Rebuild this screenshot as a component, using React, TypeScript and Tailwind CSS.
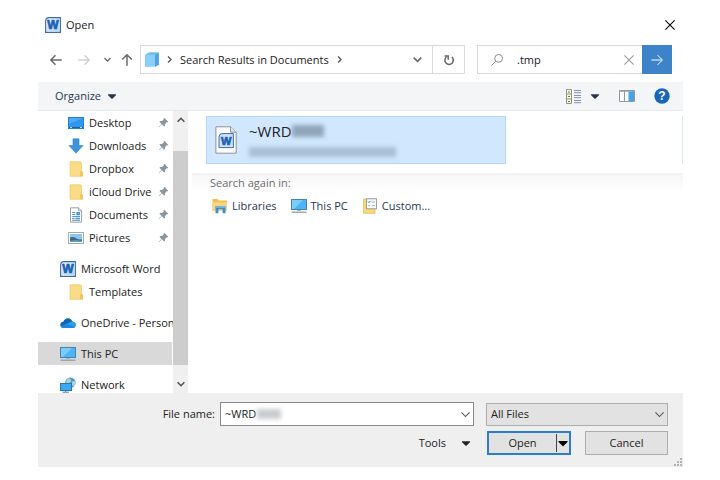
import React from 'react'
import { FaCaretDown } from 'react-icons/fa'

type IconProps = { className?: string }

const WordIcon = ({ className = 'size-4' }: IconProps) => (
  <svg viewBox="0 0 16 16" className={className} aria-hidden="true">
    <defs>
      <linearGradient id="wordFill" x1="0" y1="0" x2="1" y2="1">
        <stop offset="0" stopColor="#f4f9fe" />
        <stop offset="1" stopColor="#a9cdf0" />
      </linearGradient>
    </defs>
    <path d="M4 .6H15.4V15.4H.6V4Q.8.8 4 .6Z" fill="url(#wordFill)" stroke="#3c6cb0" strokeWidth="1.1" />
    <path d="M1.8 14.2H14.2V2" fill="none" stroke="#dcebfa" strokeWidth=".8" />
    <text x="7.8" y="12.2" textAnchor="middle" fontFamily="Liberation Sans, sans-serif" fontWeight="bold" fontSize="12" fill="#1c5fb4" stroke="#1c5fb4" strokeWidth=".7">
      W
    </text>
  </svg>
)

const WordFileIcon = () => (
  <svg viewBox="0 0 22 28" className="h-7 w-[22px] shrink-0" aria-hidden="true">
    <path d="M.9.8H15.5L21.2 6.2V27.2H.9Z" fill="#fdfdfd" stroke="#8c9399" />
    <path d="M15.5.8V6.2H21.2" fill="#e3e7ea" stroke="#8c9399" />
    <path d="M7 7.6H18.4V21.6H4V11Q4.2 7.8 7 7.6Z" fill="#cfe3f7" stroke="#3c6cb0" />
    <text x="11.2" y="18.8" textAnchor="middle" fontFamily="Liberation Sans, sans-serif" fontWeight="bold" fontSize="11" fill="#1c5fb4" stroke="#1c5fb4" strokeWidth=".7">
      W
    </text>
  </svg>
)

const SearchFolderIcon = () => (
  <svg viewBox="0 0 16 16" className="size-4 shrink-0" aria-hidden="true">
    <path d="M1 3.5L5 1.2V14.5H1Z" fill="#63b7ee" />
    <path d="M1.4 2.6L5.4.4H14.8V12.8L11 14.8H1.4Z" fill="#8bd0fa" />
    <path d="M11 2.8L14.8.4V12.8L11 14.8Z" fill="#4ba3e3" />
    <path d="M1.4 2.8L5.4.4H14.8L11 2.8Z" fill="#6fbdf0" />
  </svg>
)

const DesktopIcon = () => (
  <svg viewBox="0 0 16 16" className="size-4 shrink-0" aria-hidden="true">
    <rect x=".5" y="2.5" width="15" height="11" fill="#3197ee" stroke="#1e7fd6" />
    <path d="M1 3H15L1 9Z" fill="#4faaf5" />
    <path d="M1 12.5H15" stroke="#1161ad" />
    <path d="M2 12.5H4M12 12.5H14" stroke="#b9defc" />
  </svg>
)

const DownloadIcon = () => (
  <svg viewBox="0 0 16 16" className="size-4 shrink-0" aria-hidden="true">
    <path d="M5 .8H11V7.5H15L8 15.2L1 7.5H5Z" fill="#3f92dc" stroke="#2f7fc8" strokeWidth=".6" />
  </svg>
)

const FolderIcon = () => (
  <svg viewBox="0 0 16 16" className="size-4 shrink-0" aria-hidden="true">
    <path d="M2 .8H12.6L13.5 1.8V10L14.6 11V15.3H2Z" fill="#fbdc86" stroke="#ecc766" strokeWidth=".7" />
    <path d="M12 15.3V11L13.3 9.6L14.6 11V15.3Z" fill="#f1c55a" />
  </svg>
)

const DocumentIcon = () => (
  <svg viewBox="0 0 16 16" className="size-4 shrink-0" aria-hidden="true">
    <path d="M2.5.8H10.5L13.6 3.8V15.2H2.5Z" fill="#f9fbfc" stroke="#8b979f" strokeWidth=".9" />
    <path d="M10.5.8V3.8H13.6" fill="#dce3e7" stroke="#8b979f" strokeWidth=".7" />
    <path d="M4.2 5.5H7.2M4.2 7.5H7.2M4.2 9.6H12M4.2 11.5H6.5M4.2 13.3H12" stroke="#4c91c6" />
    <path d="M8.3 5H12V8.3H8.3ZM7.5 10.7H12V12.3H7.5Z" fill="#4c9bd8" />
  </svg>
)

const PictureIcon = () => (
  <svg viewBox="0 0 16 16" className="size-4 shrink-0" aria-hidden="true">
    <rect x=".5" y="2.5" width="15" height="11" fill="#f7f9fa" stroke="#a2abb1" />
    <rect x="2" y="4" width="12" height="8" fill="#8cc5ef" />
    <path d="M2 7.5Q5 6.4 8 8.2T14 9.2V12H2Z" fill="#3b6a86" />
    <path d="M2 10.8Q8 9.8 14 10.8V12H2Z" fill="#6aa3c6" />
  </svg>
)

const CloudIcon = () => (
  <svg viewBox="0 0 16 16" className="size-4 shrink-0" aria-hidden="true">
    <path d="M3.6 13Q.3 12.7.3 9.8Q.5 7 3.3 6.8Q4.5 3.2 8 3.2Q11.4 3.3 12.4 6.6Q15.7 7.1 15.7 10Q15.4 12.9 12.6 13Z" fill="#1064b5" />
    <path d="M3.6 13Q1.6 12.8.8 11.6L9.3 7.6Q10.5 6.5 12.4 6.6Q15.7 7.1 15.7 10Q15.4 12.9 12.6 13Z" fill="#28a0ea" />
    <path d="M.9 11.8L7 8.9L14.8 12.2Q14 13 12.6 13H3.6Q1.9 12.9.9 11.8Z" fill="#1a89dc" />
  </svg>
)

const ComputerIcon = () => (
  <svg viewBox="0 0 16 16" className="size-4 shrink-0" aria-hidden="true">
    <rect x=".5" y="1.5" width="15" height="10" fill="#4db4f5" stroke="#4783ad" />
    <path d="M1 2H12L3 11H1Z" fill="#7accfb" />
    <path d="M6 12H10V13H6Z" fill="#a9b7c1" />
    <path d="M.5 14.2H15.5" stroke="#8497a5" strokeWidth="1.2" />
  </svg>
)

const NetworkIcon = () => (
  <svg viewBox="0 0 16 16" className="size-4 shrink-0" aria-hidden="true">
    <circle cx="10.4" cy="5.6" r="5.2" fill="#5796bd" />
    <path d="M7 2Q10 .5 11 2.8T8 6.5L6 6ZM12 4.5L15.2 4Q16 7.5 13.2 9.8Q11 7 12 4.5Z" fill="#a9d4df" />
    <rect x=".5" y="6.5" width="11" height="7" fill="#3caaf0" stroke="#2b78ab" />
    <path d="M2.5 15.2H9M5.7 13.5V15" stroke="#5c7c91" />
  </svg>
)

const LibraryIcon = () => (
  <svg viewBox="0 0 16 16" className="size-4 shrink-0" aria-hidden="true">
    <path d="M.5 1H5.5L6.8 2.5H15V13H.5Z" fill="#f0c054" />
    <path d="M.5 4.2H15V13H.5Z" fill="#fad67a" />
    <path d="M3.5 15.3V8.3H13.5V15.3H10.6V11.3H6.4V15.3Z" fill="#3c8ccb" />
    <path d="M3.5 8.3H13.5V9.8H3.5Z" fill="#75baea" />
  </svg>
)

const CustomIcon = () => (
  <svg viewBox="0 0 16 16" className="size-4 shrink-0" aria-hidden="true">
    <path d="M1.5 1H13V15.3H1.5Z" fill="#fad978" stroke="#e8bf55" strokeWidth=".8" />
    <rect x="4.5" y=".8" width="10" height="10" fill="#fafcfd" stroke="#8a949b" strokeWidth=".9" />
    <path d="M6 3.6L7 4.6L8.6 2.8" fill="none" stroke="#3d6ea6" />
    <path d="M9.8 4H13M6.2 7.6H8.2M9.8 7.6H13" stroke="#a5b2bb" />
  </svg>
)

const PinIcon = () => (
  <svg viewBox="0 0 12 12" className="size-[11px] shrink-0" aria-hidden="true">
    <path d="M6.8.8L11.2 5.2L10 6L9.4 5.8L7.6 7.8L7.6 9.8L6.6 10.4L4.3 8L1.2 11L.8 10.7L3.8 7.6L1.6 5.3L2.4 4.3H4.4L6.3 2.6L6 2Z" fill="#8b959d" />
  </svg>
)

const ArrowIcon = ({ className = '' }: IconProps) => (
  <svg viewBox="0 0 12 12" className={`size-3 ${className}`} fill="none" stroke="currentColor" strokeWidth="1.5" aria-hidden="true">
    <path d="M11.8 6H1M5.5 1.2L.8 6L5.5 10.8" />
  </svg>
)

const Chevron = ({ className = 'size-2' }: IconProps) => (
  <svg viewBox="0 0 8 8" className={className} fill="none" stroke="currentColor" strokeWidth="1.5" aria-hidden="true">
    <path d="M.6 2.3L4 5.7L7.4 2.3" />
  </svg>
)

const ThinChevron = ({ className = '' }: IconProps) => (
  <svg viewBox="0 0 8 8" className={`size-[9px] ${className}`} fill="none" stroke="currentColor" aria-hidden="true">
    <path d="M.4 2.2L4 5.8L7.6 2.2" />
  </svg>
)

const CrossIcon = ({ className = '' }: IconProps) => (
  <svg viewBox="0 0 10 10" className={`size-[10px] ${className}`} stroke="currentColor" strokeWidth="1.1" aria-hidden="true">
    <path d="M.4.4L9.6 9.6M9.6.4L.4 9.6" />
  </svg>
)

const quickAccess = [
  { name: 'Desktop', icon: <DesktopIcon /> },
  { name: 'Downloads', icon: <DownloadIcon /> },
  { name: 'Dropbox', icon: <FolderIcon /> },
  { name: 'iCloud Drive', icon: <FolderIcon /> },
  { name: 'Documents', icon: <DocumentIcon /> },
  { name: 'Pictures', icon: <PictureIcon /> },
]

const searchPlaces = [
  { name: 'Libraries', icon: <LibraryIcon /> },
  { name: 'This PC', icon: <ComputerIcon /> },
  { name: 'Custom...', icon: <CustomIcon /> },
]

interface TreeItemProps {
  name: string
  icon: React.ReactNode
  nested?: boolean
  pinned?: boolean
  selected?: boolean
}

const TreeItem = ({ name, icon, nested, pinned, selected }: TreeItemProps) => (
  <li>
    <button
      type="button"
      className={`flex h-[23px] w-full items-center gap-[5px] whitespace-nowrap text-left ${
        nested ? 'pl-[30px]' : 'pl-[22px]'
      } ${selected ? 'bg-[#d9d9d9]' : ''}`}
    >
      {icon}
      <span className="flex-1">{name}</span>
      {pinned && (
        <span className="pr-[3px]">
          <PinIcon />
        </span>
      )}
    </button>
  </li>
)

const TitleBar = () => (
  <header className="flex h-[29px] items-center gap-1 pl-[7px] pr-2">
    <WordIcon />
    <h1 className="flex-1 pl-px">Open</h1>
    <button type="button" aria-label="Close" className="text-black">
      <CrossIcon />
    </button>
  </header>
)

const AddressRow = () => (
  <div className="flex items-center pb-2 pr-[11px] pt-[6px]">
    <nav className="flex w-[102px] shrink-0 items-center pl-3 text-[#6b6b6b]" aria-label="History">
      <button type="button" aria-label="Back">
        <ArrowIcon />
      </button>
      <button type="button" aria-label="Forward" className="ml-4 text-[#d2d2d2]">
        <ArrowIcon className="rotate-180" />
      </button>
      <button type="button" aria-label="Recent locations" className="ml-[14px]">
        <Chevron className="size-[7px]" />
      </button>
      <button type="button" aria-label="Up" className="ml-[10px]">
        <ArrowIcon className="rotate-90" />
      </button>
    </nav>
    <div className="flex h-[29px] min-w-0 flex-1 border border-[#d9d9d9] bg-white">
      <div className="flex min-w-0 flex-1 items-center gap-[6px] whitespace-nowrap pl-[3px] pr-[10px]">
        <SearchFolderIcon />
        <Chevron className="size-[7px] -rotate-90 text-[#555]" />
        <span className="px-px">Search Results in Documents</span>
        <Chevron className="size-[7px] -rotate-90 text-[#555]" />
        <button type="button" aria-label="Previous locations" className="ml-auto text-[#6b6b6b]">
          <Chevron className="size-[9px]" />
        </button>
      </div>
      <button type="button" aria-label="Refresh" className="flex w-8 items-center justify-center border-l border-[#d9d9d9] text-[#666]">
        <svg viewBox="0 0 12 12" className="size-3" fill="none" stroke="currentColor" strokeWidth="1.5" aria-hidden="true">
          <path d="M8.9 3.1A4.2 4.2 0 1 1 3.4 3M1.6 2.1H5.2V5.7" />
        </svg>
      </button>
    </div>
    <form className="ml-3 flex h-[29px] w-[195px] shrink-0 items-stretch border border-[#d9d9d9] bg-white" onSubmit={(e) => e.preventDefault()}>
      <label htmlFor="search" className="flex items-center pl-[13px] text-[#8d8d8d]">
        <svg viewBox="0 0 12 12" className="size-3" fill="none" stroke="currentColor" strokeWidth="1" aria-label="Search" role="img">
          <circle cx="7.6" cy="4.4" r="3.9" />
          <path d="M4.8 7.2L.4 11.6" />
        </svg>
      </label>
      <input id="search" defaultValue=".tmp" className="ml-[14px] w-0 min-w-0 flex-1 bg-transparent outline-none" />
      <button type="button" aria-label="Clear search" className="px-[9px] text-[#999]">
        <CrossIcon />
      </button>
      <button type="submit" aria-label="Go" className="-m-px flex w-[30px] items-center justify-center bg-[#3c83c9] text-white">
        <svg viewBox="0 0 12 12" className="size-3" fill="none" stroke="currentColor" strokeWidth="1" aria-hidden="true">
          <path d="M.4 6H11.2M6.6 1.2L11.4 6L6.6 10.8" />
        </svg>
      </button>
    </form>
  </div>
)

const Toolbar = () => (
  <div className="flex h-[29px] items-center border-b border-[#e6e9ec] bg-[#f4f5f7] pl-[17px] pr-[13px] text-[#26384f]">
    <button type="button" className="flex items-center gap-1">
      Organize
      <FaCaretDown className="size-[14px]" />
    </button>
    <button type="button" aria-label="Change view" className="ml-auto flex items-center gap-[7px]">
      <svg viewBox="0 0 15 15" className="size-[15px]" aria-hidden="true">
        <path d="M.5.5H5.5V14.5H.5ZM.5 5H5.5M.5 10H5.5" fill="#f6f5e8" stroke="#8f9880" />
        <path d="M2 3H4M2 7.5H4M2 12.5H4" stroke="#6c8350" strokeWidth="1.2" />
        <path d="M8 1.5H15M8 3.7H15M8 6.5H15M8 8.7H15M8 11.5H15M8 13.7H15" stroke="#8292b8" />
      </svg>
      <FaCaretDown className="size-[14px]" />
    </button>
    <button type="button" aria-label="Preview pane" className="ml-[17px]">
      <svg viewBox="0 0 16 12" className="h-3 w-4" aria-hidden="true">
        <path d="M.5.5H15.5V11.5H.5Z" fill="#fff" stroke="#8c99a3" />
        <path d="M.5 1.2H15.5M5.5 1V11" stroke="#8c99a3" />
        <path d="M9.5 1.5H15V11H9.5Z" fill="#47a3e6" />
      </svg>
    </button>
    <button type="button" aria-label="Help" className="ml-[19px]">
      <svg viewBox="0 0 16 16" className="size-4" aria-hidden="true">
        <circle cx="8" cy="8" r="7.7" fill="#1966b8" />
        <text x="8" y="12.3" textAnchor="middle" fontFamily="Liberation Sans, sans-serif" fontSize="12" fontWeight="bold" fill="#fff">
          ?
        </text>
      </svg>
    </button>
  </div>
)

const Sidebar = () => (
  <aside className="flex w-[150px] shrink-0">
    <div className="flex h-[282px] min-w-0 flex-1 flex-col gap-2 overflow-hidden pr-px">
      <ul>
        {quickAccess.map((item) => (
          <TreeItem key={item.name} name={item.name} icon={item.icon} nested pinned />
        ))}
      </ul>
      <ul>
        <TreeItem name="Microsoft Word" icon={<WordIcon className="size-4 shrink-0" />} />
        <TreeItem name="Templates" icon={<FolderIcon />} nested />
      </ul>
      <ul>
        <TreeItem name="OneDrive - Person" icon={<CloudIcon />} />
      </ul>
      <ul>
        <TreeItem name="This PC" icon={<ComputerIcon />} selected />
      </ul>
      <ul>
        <TreeItem name="Network" icon={<NetworkIcon />} />
      </ul>
    </div>
    <div className="flex w-[15px] flex-col items-center bg-[#f0f0f0] text-[#505050]">
      <button type="button" aria-label="Scroll up" className="flex h-[18px] items-center">
        <Chevron className="size-2 rotate-180" />
      </button>
      <div className="mb-[10px] mt-[22px] w-full flex-1 bg-[#cdcdcd]" />
      <button type="button" aria-label="Scroll down" className="flex h-[18px] items-center">
        <Chevron />
      </button>
    </div>
  </aside>
)

const Results = () => (
  <main className="min-w-0 flex-1 pl-1">
    <div className="flex justify-between border-b-2 border-[#f3f3f3] pb-[9px] pl-[14px] pt-[5px]">
      <button type="button" className="flex h-12 w-[300px] items-center gap-3 border border-[#b5d8f8] bg-[#d0e7fe] pl-2 text-left">
        <WordFileIcon />
        <span className="flex flex-col gap-2">
          <span className="flex items-center text-[15px] leading-4">
            ~WRD
            <span className="h-3 w-8 bg-[#91a5b8] blur-[2px]" />
          </span>
          <span className="h-[10px] w-[147px] bg-[#a9bfd5] blur-[2px]" />
        </span>
      </button>
      <span className="w-px bg-[#dbe9f6]" />
    </div>
    <section className="bg-linear-to-b from-[#f7f7f7] to-white to-[16px] pl-[18px]">
      <h2 className="text-[#6d6d6d]">Search again in:</h2>
      <ul className="flex gap-[14px] pl-[2px] pt-[7px] text-[#26384f]">
        {searchPlaces.map((place) => (
          <li key={place.name}>
            <button type="button" className="flex items-center gap-1">
              {place.icon}
              {place.name}
            </button>
          </li>
        ))}
      </ul>
    </section>
  </main>
)

const Footer = () => (
  <footer className="relative bg-[#efefef] pb-3 pr-[15px] pt-[9px]">
    <div className="flex items-center">
      <label htmlFor="fileName" className="w-[182px] shrink-0 pr-[5px] text-right">
        File name:
      </label>
      <div className="relative flex h-6 min-w-0 flex-1 items-center border border-[#8a8a8a] bg-white">
        <input id="fileName" defaultValue="~WRD" className="min-w-0 flex-1 bg-transparent pl-1 outline-none" />
        <span className="pointer-events-none absolute left-9 h-[10px] w-6 bg-[#c9cdd0] blur-[2px]" />
        <button type="button" aria-label="Show file names" className="pr-[3px] text-[#555]">
          <ThinChevron />
        </button>
      </div>
      <div className="relative ml-3 w-[182px] shrink-0">
        <select aria-label="File type" className="block h-[23px] w-full appearance-none border border-[#adadad] bg-[#e2e2e2] pl-1 outline-none">
          <option>All Files</option>
        </select>
        <ThinChevron className="pointer-events-none absolute right-1 top-[7px] text-[#555]" />
      </div>
    </div>
    <div className="flex items-center justify-end pt-[5px]">
      <button type="button" className="mr-[14px] flex items-center gap-[13px]">
        Tools
        <FaCaretDown className="size-[14px]" />
      </button>
      <div className="flex h-6 w-[84px] items-center border-2 border-[#2d7cd0] bg-[#e2e2e2]">
        <button type="button" className="flex-1">
          Open
        </button>
        <button type="button" aria-label="More open options" className="flex h-[18px] items-center border-l border-[#444] text-black">
          <FaCaretDown className="h-4 w-3" />
        </button>
      </div>
      <button type="button" className="ml-[14px] h-6 w-[83px] border border-[#adadad] bg-[#e2e2e2]">
        Cancel
      </button>
    </div>
    <svg viewBox="0 0 8 8" className="absolute bottom-px right-px size-2" fill="#b3b3b3" aria-hidden="true">
      <path d="M6 0H8V2H6ZM3 3H5V5H3ZM6 3H8V5H6ZM0 6H2V8H0ZM3 6H5V8H3ZM6 6H8V8H6Z" />
    </svg>
  </footer>
)

const App: React.FC = () => {
  return (
    <div className="min-h-screen bg-white pb-[14px] pl-[38px] pr-[37px] pt-[10px] font-['Open_Sans','Noto_Sans',sans-serif] text-[11px] leading-4 text-[#222]">
      <TitleBar />
      <AddressRow />
      <Toolbar />
      <div className="flex">
        <Sidebar />
        <Results />
      </div>
      <Footer />
    </div>
  )
}

export default App
